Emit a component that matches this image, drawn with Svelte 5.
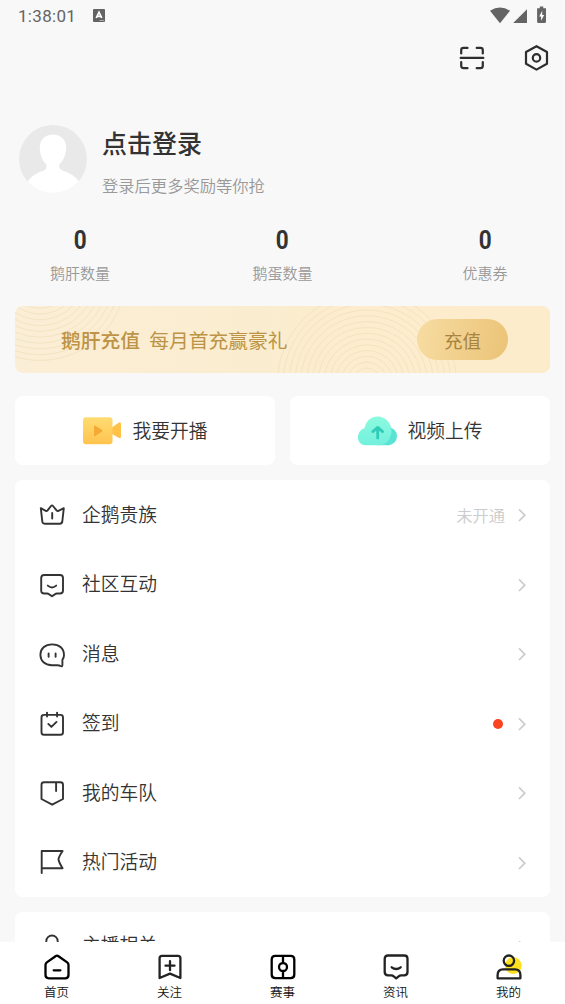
<script lang="ts">
  const stats = [
    { value: 0, label: '鹅肝数量' },
    { value: 0, label: '鹅蛋数量' },
    { value: 0, label: '优惠券' },
  ];

  const menu = [
    {
      label: '企鹅贵族',
      note: '未开通',
      icon: 'M2.8 7.2L7.8 9.9Q8.8 10.3 9.6 9.4L13 5Q14 3.8 15 5L18.6 9.4Q19.4 10.3 20.4 9.9L25.8 7.2L24.3 20.5Q24 22.7 21.8 22.7H6.7Q4.5 22.7 4.3 20.5ZM14.2 12V17.6',
    },
    {
      label: '社区互动',
      icon: 'M6.2 5H22Q25 5 25 8V20.5Q25 23.5 22 23.5H19Q17.8 23.5 16.8 24.4L14 26.3L11.2 24.4Q10.2 23.5 9 23.5H6.2Q3.2 23.5 3.2 20.5V8Q3.2 5 6.2 5ZM9.8 15.6Q14 19.2 18.2 15.6',
    },
    {
      label: '消息',
      icon: 'M24.4 25.2V19.8Q26 17.8 26 15C26 8.6 21.5 4.4 14.2 4.4S2.4 8.6 2.4 14.8S6.8 25.2 14 25.2H19.6Q21.3 25.2 22.5 26Q24.2 27 24.4 25.2ZM10.6 13.4V16.8M17.6 13.4V16.8',
    },
    {
      label: '签到',
      dot: true,
      icon: 'M6 5.9H22.5Q25 5.9 25 8.4V23.2Q25 25.8 22.5 25.8H6Q3.5 25.8 3.5 23.2V8.4Q3.5 5.9 6 5.9ZM9 3.6V7.5M19.1 3.6V7.5M10.3 14.9L13.4 17.9L18.5 12.9',
    },
    {
      label: '我的车队',
      icon: 'M6 3.2H22.5Q25 3.2 25 5.7V20L14.2 25.7L3.5 20V5.7Q3.5 3.2 6 3.2ZM18.1 3.5V12',
    },
    {
      label: '热门活动',
      icon: 'M3.7 25.1V3H24.6Q20.5 9 20.5 11.5Q21 14.5 24.6 20.3H3.7',
    },
  ];

  const tabs = [
    {
      label: '首页',
      icon: 'M12.5 3.2Q14 2.2 15.5 3.2L24.2 9.4Q25.5 10.4 25.5 12V22Q25.5 25.3 22.2 25.3H5.8Q2.5 25.3 2.5 22V12Q2.5 10.4 3.8 9.4ZM10.7 17.3H17.4',
      color: '#000',
    },
    {
      label: '关注',
      icon: 'M6 2.8H22Q24.4 2.8 24.4 5.2V25L14 20.6L3.6 25V5.2Q3.6 2.8 6 2.8ZM14 8.2V17.2M9.5 12.7H18.5',
      color: '#222',
    },
    {
      label: '赛事',
      icon: 'M6.3 2.8H21.7Q25.3 2.8 25.3 6.4V21.6Q25.3 25.2 21.7 25.2H6.3Q2.7 25.2 2.7 21.6V6.4Q2.7 2.8 6.3 2.8ZM14 2.8V10M14 18V25.2M14 10A4 4 0 1 1 14 18A4 4 0 1 1 14 10Z',
      color: '#000',
    },
    {
      label: '资讯',
      icon: 'M6 2.5H22.2Q25.5 2.5 25.5 5.8V19Q25.5 22.3 22.2 22.3H19Q17.8 22.3 17 23.1L14.2 25.4L11.4 23.1Q10.6 22.3 9.4 22.3H6Q2.7 22.3 2.7 19V5.8Q2.7 2.5 6 2.5ZM9.7 14.3Q14.2 17.8 18.7 14.3',
      color: '#222',
    },
    {
      label: '我的',
      icon: 'M13.9 2.5A5.2 5.2 0 1 1 13.9 12.9A5.2 5.2 0 1 1 13.9 2.5ZM8 16.3H20Q25.4 16.3 25.4 22V25.3H2.6V22Q2.6 16.3 8 16.3Z',
      color: '#222',
      active: true,
    },
  ];

  // concentric ripples printed on the banner
  const ripples = Array.from({ length: 14 }, (_, i) => 14 + i * 5.8);
</script>

{#snippet chevron()}
  <svg class="chevron" viewBox="0 0 10 14" width="10" height="14">
    <path d="M2 1.4L7.8 7.2L2 13" />
  </svg>
{/snippet}

<div class="page">
  <div class="status-bar">
    <span class="clock">1:38:01</span>
    <svg class="input-badge" viewBox="0 0 12 13" width="12" height="13">
      <rect width="12" height="13" rx="1" fill="#636363" />
      <path d="M3.2 9L6 3.2L8.8 9M4.3 7.3H7.7" fill="none" stroke="#fff" stroke-width="1.7" />
      <path d="M6.5 11.5H11" stroke="#aaa" stroke-width="1" />
    </svg>
    <svg class="system" viewBox="0 0 58 18" width="58" height="18" fill="#646464">
      <path d="M0 3.8Q10-2.9 20 3.8L10 16.2Z" />
      <path d="M37 2.2V16H23.2Z" />
      <path d="M49.8 -.5H53.3V1.2H56V14.5Q56 16 54.5 16H48.6Q47.1 16 47.1 14.5V1.2H49.8Z" />
      <path d="M52.2 3.7L49.2 9.4H51.1V13.7L54.1 8H52.2Z" fill="#fff" />
    </svg>
  </div>

  <div class="actions">
    <svg viewBox="0 0 28 28" width="28" height="28">
      <path d="M3.2 9.5V6.2Q3.2 3.9 5.5 3.9H9.5M18.7 3.9H22.5Q24.8 3.9 24.8 6.2V9.5M24.8 18V21.8Q24.8 24.2 22.5 24.2H18.7M9.5 24.2H5.5Q3.2 24.2 3.2 21.8V18M2.7 13.9H25.3" />
    </svg>
    <svg viewBox="0 0 28 28" width="28" height="28">
      <path d="M14.5 2.2L25 8V19.8L14.5 25.6L4 19.8V8Z" />
      <circle cx="14.5" cy="13.9" r="3.7" />
    </svg>
  </div>

  <div class="profile">
    <svg class="avatar" viewBox="0 0 68 68" width="68" height="68">
      <defs>
        <clipPath id="avatar-clip"><circle cx="34" cy="34" r="34" /></clipPath>
      </defs>
      <g clip-path="url(#avatar-clip)">
        <rect width="68" height="68" fill="#e9e9e9" />
        <path d="M34 9.5C42 9.5 47.2 15 47.2 22.5C47.2 30 44.2 36 40.3 39.5V42Q40.5 44.5 43.5 45.5Q54 48.5 60 56.5L56 68H12L8.5 56.5Q14.5 48.5 25 45.5Q27.5 44.5 27.5 42V39.5C23.5 36 20.8 30 20.8 22.5C20.8 15 26 9.5 34 9.5Z" fill="#fff" />
      </g>
    </svg>
    <div>
      <div class="name">点击登录</div>
      <div class="hint">登录后更多奖励等你抢</div>
    </div>
  </div>

  <div class="stats">
    {#each stats as stat}
      <div class="stat">
        <span class="value">{stat.value}</span>
        <span class="label">{stat.label}</span>
      </div>
    {/each}
  </div>

  <div class="banner">
    <svg class="ripples" viewBox="0 0 535 67" width="535" height="67">
      {#each ripples as r}
        <circle cx="25" cy="-32" r={r - 3} />
        <circle cx="352" cy="76" r={r} />
      {/each}
    </svg>
    <strong>鹅肝充值</strong>
    <span class="promo">每月首充赢豪礼</span>
    <button class="recharge">充值</button>
  </div>

  <div class="shortcuts">
    <button class="shortcut">
      <svg viewBox="0 0 40 30" width="40" height="30">
        <defs>
          <linearGradient id="camera" x1="0" y1="0" x2="0" y2="1">
            <stop offset="0" stop-color="#ffdc72" />
            <stop offset="1" stop-color="#ffc34e" />
          </linearGradient>
        </defs>
        <path d="M30 11.5L36.6 6.7Q39 5.5 39 8V20.5Q39 23 36.6 21.8L30 18Z" fill="#ffc247" />
        <rect x="1" y="1.3" width="29.5" height="27" rx="3" fill="url(#camera)" />
        <path d="M12 10.5Q12 9.2 13.3 9.8L20 14Q21 14.8 20 15.6L13.3 20Q12 20.7 12 19.4Z" fill="#f3aa35" />
      </svg>
      <span>我要开播</span>
    </button>
    <button class="shortcut">
      <svg viewBox="0 0 40 30" width="40" height="30">
        <defs>
          <linearGradient id="cloud" x1="0" y1="0" x2="0" y2="1">
            <stop offset="0" stop-color="#8cfadf" />
            <stop offset="1" stop-color="#72f0dd" />
          </linearGradient>
        </defs>
        <circle cx="31" cy="20.2" r="9" fill="#58e3d5" />
        <rect x="20" y="23" width="12" height="6.2" fill="#58e3d5" />
        <path d="M9 29.2C4 29.2 1 26 1 21.2C1 17 3.5 13.5 7.5 12.3C9 5.5 13.5 .5 20.5 .5C28.5 .5 34.5 7 34.5 15C34.5 23 29 29.2 22.5 29.2Z" fill="url(#cloud)" />
        <path d="M20.7 22V12M15.8 15.6L20.7 11.4L25.6 15.6" fill="none" stroke="#31ccb9" stroke-width="2.8" stroke-linecap="round" stroke-linejoin="round" />
      </svg>
      <span>视频上传</span>
    </button>
  </div>

  <div class="card">
    {#each menu as item}
      <div class="row">
        <svg class="icon" viewBox="0 0 28 28" width="28" height="28">
          <path d={item.icon} />
        </svg>
        <span class="title">{item.label}</span>
        {#if item.note}<span class="note">{item.note}</span>{/if}
        {#if item.dot}<span class="dot"></span>{/if}
        {@render chevron()}
      </div>
    {/each}
  </div>

  <div class="card">
    <div class="row last">
      <svg class="icon" viewBox="0 0 28 28" width="28" height="28">
        <path d="M8.3 14V8.2A5.7 5.7 0 0 1 19.7 8.2V14A5.7 5.7 0 0 1 8.3 14ZM4 14Q5 23 14 23T24 14" />
      </svg>
      <span class="title">主播相关</span>
      {@render chevron()}
    </div>
  </div>

  <nav class="tabs">
    {#each tabs as tab}
      <div class="tab">
        <svg viewBox="0 0 28 28" width="28" height="28">
          {#if tab.active}<circle cx="18.3" cy="12.6" r="8.4" fill="#ffe01f" />{/if}
          <path d={tab.icon} stroke={tab.color} />
        </svg>
        <span>{tab.label}</span>
      </div>
    {/each}
  </nav>
</div>

<style>
  :global(body) {
    margin: 0;
  }

  .page {
    position: relative;
    width: 565px;
    height: 1004px;
    overflow: hidden;
    background: #f8f8f8;
    color: #333;
    font-family: Roboto, "Noto Sans CJK SC", sans-serif;
    font-weight: 350;
  }

  button {
    border: 0;
    padding: 0;
    font-family: inherit;
    font-weight: inherit;
    color: inherit;
  }

  .status-bar {
    display: flex;
    align-items: center;
    height: 31px;
    padding: 0 17px 0 18px;
  }

  .clock {
    font-size: 17px;
    font-weight: 400;
    letter-spacing: 0.3px;
    color: #646464;
  }

  .input-badge {
    margin-left: 17px;
  }

  .system {
    margin-left: auto;
    overflow: visible;
  }

  .actions {
    display: flex;
    justify-content: flex-end;
    align-items: center;
    gap: 36px;
    height: 54px;
    padding-right: 15px;
  }

  .actions svg {
    fill: none;
    stroke: #2e2e2e;
    stroke-width: 2.2;
    stroke-linecap: round;
    stroke-linejoin: round;
  }

  .profile {
    display: flex;
    gap: 15px;
    height: 68px;
    padding: 40px 0 0 19px;
  }

  .name {
    margin-top: 3px;
    font-size: 25px;
    line-height: 34px;
    font-weight: 500;
  }

  .hint {
    margin-top: 13px;
    font-size: 16.3px;
    line-height: 24px;
    color: #999;
  }

  .stats {
    display: flex;
    justify-content: space-between;
    padding: 33px 15px 0;
  }

  .stat {
    display: flex;
    flex-direction: column;
    align-items: center;
    width: 130px;
  }

  .value {
    font-size: 25px;
    line-height: 30px;
    font-weight: 700;
    transform: scaleX(0.9);
  }

  .label {
    margin-top: 7px;
    font-size: 15px;
    line-height: 22px;
    color: #999;
  }

  .banner {
    position: relative;
    display: flex;
    align-items: center;
    box-sizing: border-box;
    height: 67px;
    margin: 21px 15px 0;
    padding: 0 42px 0 46px;
    border-radius: 8px;
    overflow: hidden;
    background: linear-gradient(90deg, #fbeed6, #faedcf 45%, #fdecce 60%, #fdeccb);
    color: #bd9345;
    font-size: 19.8px;
  }

  .ripples {
    position: absolute;
    inset: 0;
    fill: none;
    stroke: #f2e2bf;
    stroke-width: 0.9;
  }

  .banner strong {
    position: relative;
    font-weight: 500;
  }

  .promo {
    position: relative;
    margin-left: 9px;
    font-weight: 400;
  }

  .recharge {
    position: relative;
    width: 91px;
    height: 41px;
    margin-left: auto;
    border-radius: 21px;
    background: linear-gradient(100deg, #f7dca2, #ebc377);
    color: #a88440;
    font-size: 18.5px;
    font-weight: 400;
  }

  .shortcuts {
    display: grid;
    grid-template-columns: 1fr 1fr;
    gap: 15px;
    margin: 23px 15px 15px;
  }

  .shortcut {
    display: flex;
    justify-content: center;
    align-items: center;
    gap: 11px;
    height: 69px;
    padding-right: 1px;
    border-radius: 8px;
    background: #fff;
    font-size: 18.75px;
  }

  .shortcut span {
    margin-top: -2px;
  }

  .card {
    margin: 0 15px 15px;
    border-radius: 8px;
    background: #fff;
  }

  .row {
    display: flex;
    align-items: center;
    height: 69.5px;
    padding: 0 23px;
  }

  .icon {
    fill: none;
    stroke: #333;
    stroke-width: 1.9;
    stroke-linecap: round;
    stroke-linejoin: round;
  }

  .title {
    flex: 1;
    margin: -3px 0 0 16px;
    font-size: 18.75px;
  }

  .last .title {
    margin-top: -7px;
  }

  .note {
    margin-right: 12px;
    font-size: 16.3px;
    color: #ccc;
  }

  .dot {
    width: 10px;
    height: 10px;
    margin: 1px 14px 0 0;
    border-radius: 50%;
    background: #fc4320;
  }

  .chevron {
    margin-top: 1px;
    fill: none;
    stroke: #ccc;
    stroke-width: 1.7;
  }

  .tabs {
    position: absolute;
    left: 0;
    right: 0;
    bottom: 0;
    display: grid;
    grid-template-columns: repeat(5, 1fr);
    height: 62px;
    background: #fff;
  }

  .tab {
    display: flex;
    flex-direction: column;
    align-items: center;
    padding-top: 11px;
    color: #111;
    font-size: 12.5px;
    line-height: 18px;
  }

  .tab span {
    margin-top: 3px;
  }

  .tab path {
    fill: none;
    stroke-width: 2.3;
    stroke-linecap: round;
    stroke-linejoin: round;
  }
</style>
